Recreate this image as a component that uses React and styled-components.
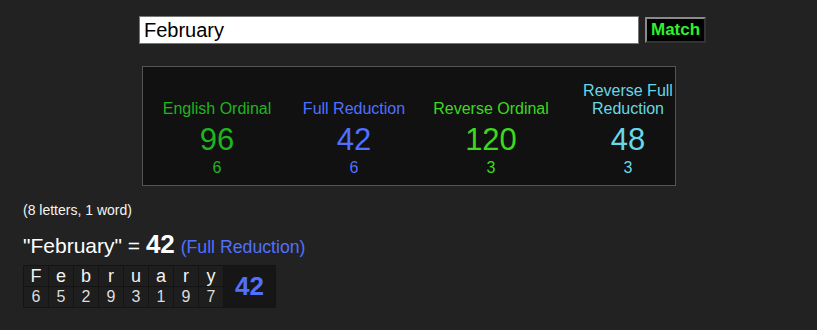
import React from 'react';
import styled, { createGlobalStyle } from 'styled-components';

const ciphers = [
  { name: 'English Ordinal', value: 96, reduced: 6, color: '#1fb51f' },
  { name: 'Full Reduction', value: 42, reduced: 6, color: '#5070ff' },
  { name: 'Reverse Ordinal', value: 120, reduced: 3, color: '#3ed81e' },
  { name: 'Reverse Full Reduction', value: 48, reduced: 3, color: '#66d8e6' },
];

const letters = [
  ['F', 6], ['e', 5], ['b', 2], ['r', 9], ['u', 3], ['a', 1], ['r', 9], ['y', 7],
];

const Global = createGlobalStyle`
  html, body {
    margin: 0;
    padding: 0;
    background: #222222;
    font-family: Arial, "Liberation Sans", sans-serif;
  }
`;

const Page = styled.div`
  width: 817px;
  height: 330px;
  background: #222222;
  overflow: hidden;
`;

const SearchRow = styled.div`
  display: flex;
  align-items: center;
  gap: 6px;
  padding: 16px 0 0 139px;
`;

const Input = styled.input`
  box-sizing: border-box;
  width: 500px;
  height: 28px;
  border: 1px solid #767676;
  padding: 0 4px;
  font-family: Arial, "Liberation Sans", sans-serif;
  font-size: 20px;
  color: #000;
  background: #fff;
  outline: none;
`;

const MatchButton = styled.button`
  box-sizing: border-box;
  height: 26px;
  padding: 0 4px;
  background: #000;
  color: #2ef02e;
  font-family: Arial, "Liberation Sans", sans-serif;
  font-weight: bold;
  font-size: 17px;
  border: 2px solid;
  border-color: #8a8a8a #333 #333 #8a8a8a;
`;

const ResultBox = styled.div`
  box-sizing: border-box;
  width: 534px;
  margin: 22px auto 0;
  padding: 15px 0 8px 6px;
  background: #111111;
  border: 1px solid #555;
`;

const CipherGrid = styled.div`
  display: grid;
  grid-template-columns: repeat(4, 137px);
`;

const Cell = styled.div`
  display: flex;
  flex-direction: column;
  align-items: center;
  color: ${p => p.$color};
  text-align: center;
`;

const Label = styled.div`
  min-height: 36px;
  max-width: 100px;
  display: flex;
  align-items: flex-end;
  justify-content: center;
  font-size: 16px;
  line-height: 18px;
  white-space: ${p => (p.$wrap ? 'normal' : 'nowrap')};
`;

const BigValue = styled.div`
  font-size: 31px;
  line-height: 34px;
  margin-top: 5px;
`;

const SmallValue = styled.div`
  font-size: 16px;
  line-height: 18px;
  margin-top: 2px;
`;

const Summary = styled.div`
  padding: 16px 0 0 23px;
  color: #f4f4f0;
`;

const Counts = styled.div`
  font-size: 14px;
  line-height: 16px;
`;

const Phrase = styled.div`
  margin-top: 12px;
  font-size: 21px;
  line-height: 28px;
  color: #fff;
`;

const Total = styled.span`
  font-weight: bold;
  font-size: 26px;
`;

const CipherName = styled.span`
  font-size: 17.7px;
  color: #5070ff;
`;

const LetterTable = styled.table`
  margin-top: 4px;
  border-collapse: separate;
  border-spacing: 1px;
  background: #141414;
  font-family: Arial, "Liberation Sans", sans-serif;
`;

const LetterCell = styled.td`
  width: 24px;
  height: 20px;
  padding: 0;
  background: #1e1e1e;
  text-align: center;
  color: ${p => (p.$num ? '#dcdcdc' : '#f2f2f2')};
  font-size: ${p => (p.$num ? '16px' : '18px')};
  line-height: 20px;
`;

const TotalCell = styled.td`
  width: 51px;
  padding: 0;
  background: #161616;
  text-align: center;
  color: #5070ff;
  font-weight: bold;
  font-size: 26px;
`;

export default function App() {
  return (
    <Page>
      <Global />
      <SearchRow>
        <Input defaultValue="February" />
        <MatchButton>Match</MatchButton>
      </SearchRow>
      <ResultBox>
        <CipherGrid>
          {ciphers.map((c, i) => (
            <Cell key={c.name} $color={c.color}>
              <Label $wrap={i === 3}>{c.name}</Label>
              <BigValue>{c.value}</BigValue>
              <SmallValue>{c.reduced}</SmallValue>
            </Cell>
          ))}
        </CipherGrid>
      </ResultBox>
      <Summary>
        <Counts>(8 letters, 1 word)</Counts>
        <Phrase>
          "February" = <Total>42</Total> <CipherName>(Full Reduction)</CipherName>
        </Phrase>
        <LetterTable>
          <tbody>
            <tr>
              {letters.map(([l], i) => (
                <LetterCell key={`l-${i}`}>{l}</LetterCell>
              ))}
              <TotalCell rowSpan={2}>42</TotalCell>
            </tr>
            <tr>
              {letters.map(([, n], i) => (
                <LetterCell key={`n-${i}`} $num>{n}</LetterCell>
              ))}
            </tr>
          </tbody>
        </LetterTable>
      </Summary>
    </Page>
  );
}
